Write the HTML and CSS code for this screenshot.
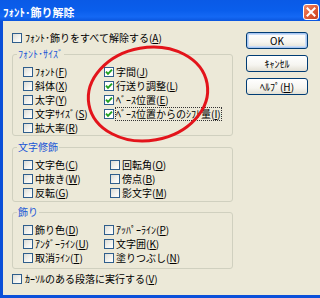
FILE: index.html
```html
<!DOCTYPE html>
<html lang="ja">
<head>
<meta charset="utf-8">
<title>ﾌｫﾝﾄ･飾り解除</title>
<link rel="stylesheet" href="styles.css">
</head>
<body>
<div class="window">
  <div class="titlebar">
    <span class="title">ﾌｫﾝﾄ･飾り解除</span>
    <span class="close"><svg width="14" height="14" viewBox="0 0 14 14"><path d="M3.5 3.5 L10.5 10.5 M10.5 3.5 L3.5 10.5" stroke="#fff" stroke-width="2" stroke-linecap="square"/></svg></span>
  </div>
  <div class="client">
    <div class="main">
      <div class="cb top"><span class="box"></span><span class="txt">ﾌｫﾝﾄ･飾りをすべて解除する(<u>A</u>)</span></div>

      <fieldset class="group g1">
        <legend>ﾌｫﾝﾄ･ｻｲｽﾞ</legend>
        <div class="cols">
          <div class="col">
            <div class="cb"><span class="box"></span><span class="txt">ﾌｫﾝﾄ(<u>F</u>)</span></div>
            <div class="cb"><span class="box"></span><span class="txt">斜体(<u>X</u>)</span></div>
            <div class="cb"><span class="box"></span><span class="txt">太字(<u>Y</u>)</span></div>
            <div class="cb"><span class="box"></span><span class="txt">文字ｻｲｽﾞ(<u>S</u>)</span></div>
            <div class="cb"><span class="box"></span><span class="txt">拡大率(<u>R</u>)</span></div>
          </div>
          <div class="col">
            <div class="cb"><span class="box on"><svg width="8" height="8" viewBox="0 0 8 8"><path d="M1 3.6 L3 5.8 L7 1.6" fill="none" stroke="#21A121" stroke-width="1.9"/></svg></span><span class="txt">字間(<u>J</u>)</span></div>
            <div class="cb"><span class="box on"><svg width="8" height="8" viewBox="0 0 8 8"><path d="M1 3.6 L3 5.8 L7 1.6" fill="none" stroke="#21A121" stroke-width="1.9"/></svg></span><span class="txt">行送り調整(<u>L</u>)</span></div>
            <div class="cb"><span class="box on"><svg width="8" height="8" viewBox="0 0 8 8"><path d="M1 3.6 L3 5.8 L7 1.6" fill="none" stroke="#21A121" stroke-width="1.9"/></svg></span><span class="txt">ﾍﾞｰｽ位置(<u>E</u>)</span></div>
            <div class="cb"><span class="box on"><svg width="8" height="8" viewBox="0 0 8 8"><path d="M1 3.6 L3 5.8 L7 1.6" fill="none" stroke="#21A121" stroke-width="1.9"/></svg></span><span class="txt focus">ﾍﾞｰｽ位置からのｼﾌﾄ量(<u>I</u>)</span></div>
          </div>
        </div>
      </fieldset>

      <fieldset class="group g2">
        <legend>文字修飾</legend>
        <div class="cols">
          <div class="col">
            <div class="cb"><span class="box"></span><span class="txt">文字色(<u>C</u>)</span></div>
            <div class="cb"><span class="box"></span><span class="txt">中抜き(<u>W</u>)</span></div>
            <div class="cb"><span class="box"></span><span class="txt">反転(<u>G</u>)</span></div>
          </div>
          <div class="col">
            <div class="cb"><span class="box"></span><span class="txt">回転角(<u>O</u>)</span></div>
            <div class="cb"><span class="box"></span><span class="txt">傍点(<u>B</u>)</span></div>
            <div class="cb"><span class="box"></span><span class="txt">影文字(<u>M</u>)</span></div>
          </div>
        </div>
      </fieldset>

      <fieldset class="group g3">
        <legend>飾り</legend>
        <div class="cols">
          <div class="col">
            <div class="cb"><span class="box"></span><span class="txt">飾り色(<u>D</u>)</span></div>
            <div class="cb"><span class="box"></span><span class="txt">ｱﾝﾀﾞｰﾗｲﾝ(<u>U</u>)</span></div>
            <div class="cb"><span class="box"></span><span class="txt">取消ﾗｲﾝ(<u>T</u>)</span></div>
          </div>
          <div class="col">
            <div class="cb"><span class="box"></span><span class="txt">ｱｯﾊﾟｰﾗｲﾝ(<u>P</u>)</span></div>
            <div class="cb"><span class="box"></span><span class="txt">文字囲(<u>K</u>)</span></div>
            <div class="cb"><span class="box"></span><span class="txt">塗りつぶし(<u>N</u>)</span></div>
          </div>
        </div>
      </fieldset>

      <div class="cb top bottom"><span class="box"></span><span class="txt">ｶｰｿﾙのある段落に実行する(<u>V</u>)</span></div>
    </div>
    <div class="buttons">
      <button class="btn default">OK</button>
      <button class="btn">ｷｬﾝｾﾙ</button>
      <button class="btn">ﾍﾙﾌﾟ(<u>H</u>)</button>
    </div>
  </div>
</div>
<svg class="mark" width="320" height="298" viewBox="0 0 320 298">
  <ellipse cx="148" cy="94" rx="60" ry="46.5" transform="rotate(-10 148 94)" fill="none" stroke="#E3141B" stroke-width="3"/>
</svg>
</body>
</html>
```

FILE: styles.css
```css
* { box-sizing: border-box; }
html, body { margin: 0; padding: 0; }
body {
  position: relative;
  width: 320px;
  height: 298px;
  overflow: hidden;
  background: #ECE9D8;
  font-family: "Noto Sans CJK JP", "Noto Sans", sans-serif;
  font-size: 10px;
  color: #000;
}
.window {
  width: 320px;
  height: 298px;
  background: #ECE9D8;
  border-left: 3px solid #0A4FD8;
  border-bottom: 3px solid #0B50DA;
  display: flex;
  flex-direction: column;
}
.titlebar {
  height: 21px;
  margin-left: -3px;
  padding: 4px 1px 0 3px;
  display: flex;
  align-items: flex-start;
  justify-content: space-between;
  background: linear-gradient(to bottom, #0A5AE6 0%, #0A5EEC 50%, #1468F4 80%, #0A55DE 100%);
}
.title {
  color: #fff;
  font-weight: bold;
  font-size: 11px;
  line-height: 16px;
  white-space: nowrap;
}
.close {
  width: 16px;
  height: 16px;
  border: 1px solid #fff;
  border-radius: 3px;
  background: linear-gradient(135deg, #F08B6A 0%, #E2603C 45%, #C8401E 100%);
  display: flex;
  align-items: center;
  justify-content: center;
}
.client {
  flex: 1;
  display: flex;
  padding: 11px 0 0 9px;
}
.main {
  width: 221px;
  display: flex;
  flex-direction: column;
}
.cb {
  display: flex;
  align-items: center;
  gap: 2px;
  height: 14px;
  white-space: nowrap;
}
.cb.top { height: 12px; gap: 3px; }
.box {
  flex: none;
  width: 10px;
  height: 10px;
  border: 1px solid #2F5E8C;
  background: linear-gradient(135deg, #DCDCD6 0%, #F4F4F0 60%, #FFFFFF 100%);
  display: flex;
  align-items: center;
  justify-content: center;
}
.box.on { background: #fff; }
.txt { line-height: 12px; }
.txt u { text-decoration: underline; text-underline-offset: 1px; }
.txt.focus { outline: 1px dotted #333; outline-offset: 0; }

.group {
  margin: 0;
  padding: 0;
  border: 1px solid #D0D0BF;
  border-radius: 3px;
  min-width: 0;
}
.group legend {
  margin-left: 4px;
  padding: 0 1px;
  line-height: 10px;
  font-size: 10px;
  color: #1A56D6;
  white-space: nowrap;
}
.cols {
  display: grid;
  padding: 6px 0 0 10px;
}
.col { display: flex; flex-direction: column; }
.g1 { margin-top: 5px; }
.g1 .cols { grid-template-columns: 81px 1fr; }
.g2 { margin-top: 6px; }
.g2 .cols { grid-template-columns: 87px 1fr; padding-bottom: 1px; }
.g3 { margin-top: 5px; }
.g3 .cols { grid-template-columns: 81px 1fr; padding-bottom: 3px; }
.cb.bottom { margin-top: 4px; }

.buttons {
  margin-left: 13px;
  width: 62px;
  display: flex;
  flex-direction: column;
  gap: 6px;
}
.btn {
  height: 17px;
  padding: 0;
  border: 1px solid #003C74;
  border-radius: 3px;
  background: linear-gradient(to bottom, #FFFFFF 0%, #F6F5F0 60%, #E3E0D4 100%);
  font-family: "Noto Sans CJK JP", "Noto Sans", sans-serif;
  font-size: 10px;
  line-height: 15px;
  color: #000;
  white-space: nowrap;
}
.btn.default {
  box-shadow: inset 0 0 0 1px #A9C7F2, inset 0 0 0 2px #C9DCF7;
}
.mark {
  position: absolute;
  left: 0;
  top: 0;
  pointer-events: none;
}
```
